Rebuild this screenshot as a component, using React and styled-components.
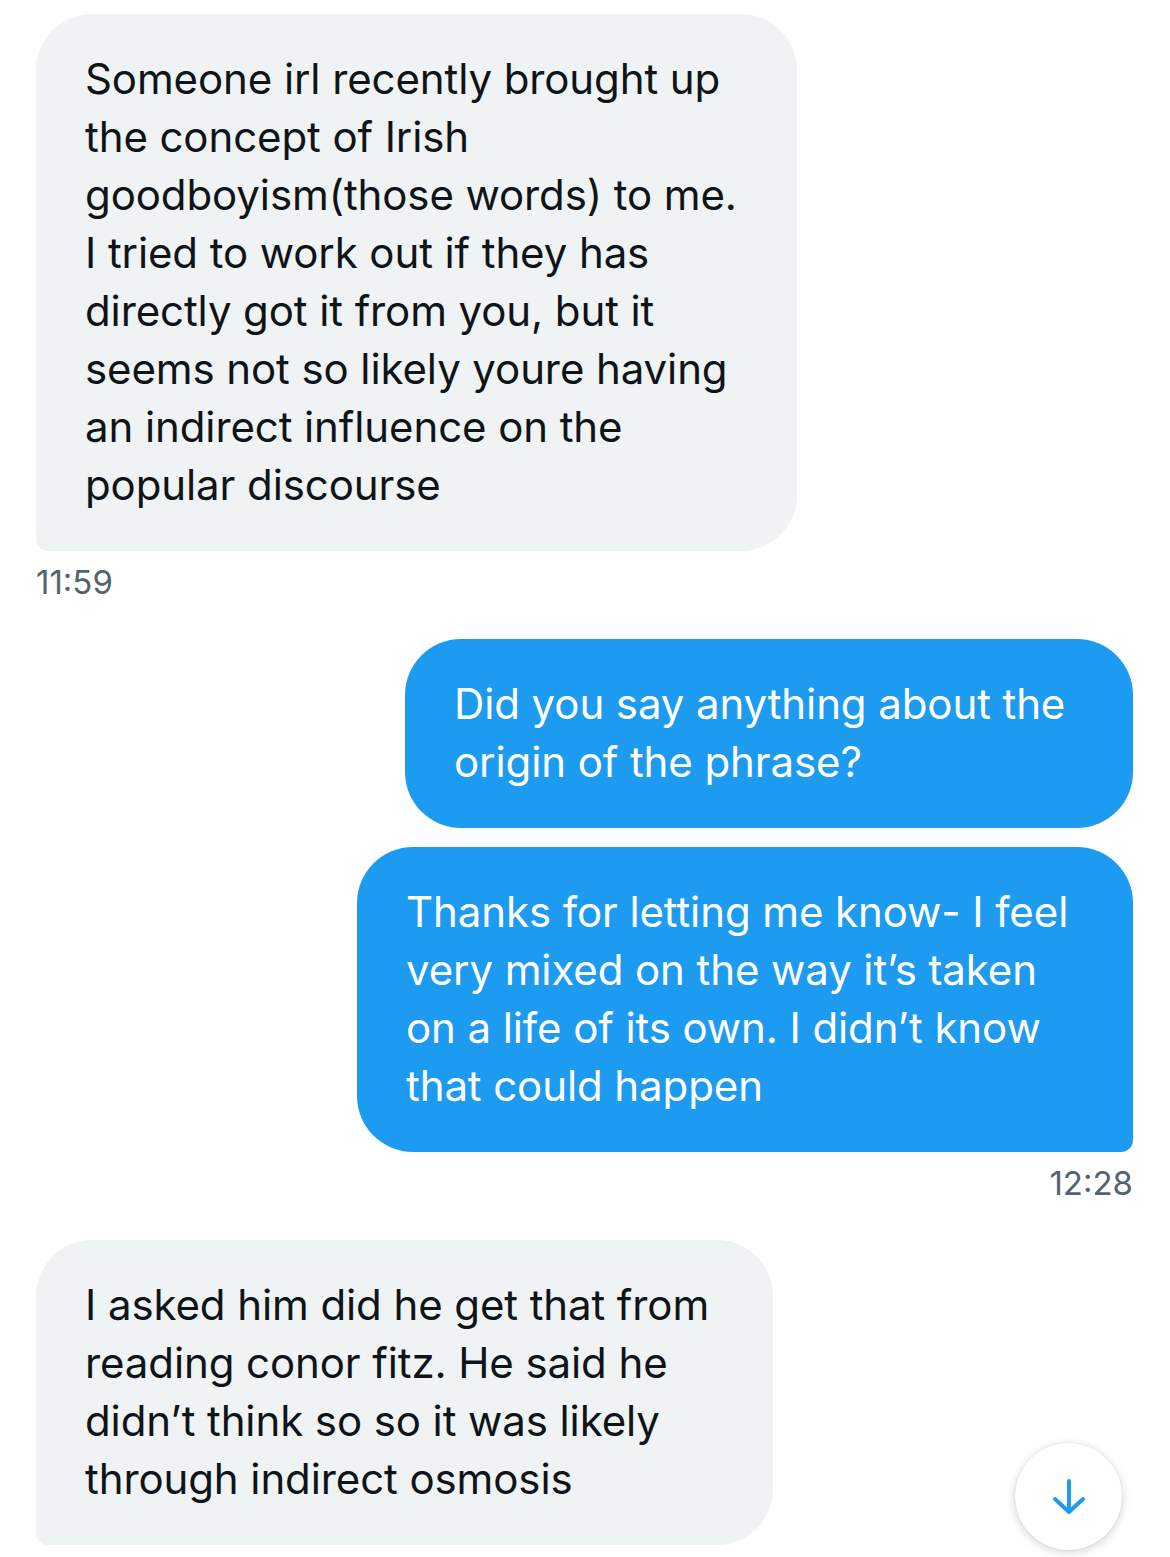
import React from 'react'
import styled, { createGlobalStyle } from 'styled-components'

const GlobalStyle = createGlobalStyle`
  * { box-sizing: border-box; }
  body {
    margin: 0;
    background: #ffffff;
    font-family: Inter, "Noto Sans", "DejaVu Sans", sans-serif;
    -webkit-font-smoothing: antialiased;
  }
`

const Page = styled.div`
  position: relative;
  width: 1170px;
  height: 1557px;
  overflow: hidden;
  background: #fff;
`

const Thread = styled.div`
  display: flex;
  flex-direction: column;
  gap: 35px;
  padding: 14px 37px 0 36px;
`

const Group = styled.div`
  display: flex;
  flex-direction: column;
  align-items: ${(p) => (p.$sent ? 'flex-end' : 'flex-start')};
  gap: 19px;
`

const Bubble = styled.div`
  width: ${(p) => p.$width}px;
  padding: 36px 46px 37px 49px;
  border-radius: 56px;
  ${(p) =>
    p.$tail &&
    (p.$sent ? 'border-bottom-right-radius: 12px;' : 'border-bottom-left-radius: 12px;')}
  background: ${(p) => (p.$sent ? '#1d9bf0' : '#eff3f4')};
  color: ${(p) => (p.$sent ? '#ffffff' : '#0f1419')};
  font-size: 42px;
  line-height: 58px;
  letter-spacing: -0.1px;
`

const Line = styled.div`
  white-space: nowrap;
`

const Time = styled.div`
  margin-top: -10px;
  font-size: 33px;
  line-height: 44px;
  color: #536471;
`

const ScrollButton = styled.button`
  position: absolute;
  right: 48px;
  bottom: 7px;
  width: 107px;
  height: 107px;
  border: none;
  border-radius: 50%;
  background: #ffffff;
  box-shadow: 0 2px 10px rgba(0, 0, 0, 0.18), 0 0 2px rgba(0, 0, 0, 0.08);
  display: flex;
  align-items: center;
  justify-content: center;
  padding: 0;
`

const messages = [
  {
    sent: false,
    time: '11:59',
    bubbles: [
      {
        width: 761,
        lines: [
          'Someone irl recently brought up',
          'the concept of Irish',
          'goodboyism(those words) to me.',
          'I tried to work out if they has',
          'directly got it from you, but it',
          'seems not so likely youre having',
          'an indirect influence on the',
          'popular discourse',
        ],
      },
    ],
  },
  {
    sent: true,
    time: '12:28',
    bubbles: [
      { width: 728, lines: ['Did you say anything about the', 'origin of the phrase?'] },
      {
        width: 776,
        lines: [
          'Thanks for letting me know- I feel',
          'very mixed on the way it’s taken',
          'on a life of its own. I didn’t know',
          'that could happen',
        ],
      },
    ],
  },
  {
    sent: false,
    bubbles: [
      {
        width: 737,
        lines: [
          'I asked him did he get that from',
          'reading conor fitz. He said he',
          'didn’t think so so it was likely',
          'through indirect osmosis',
        ],
      },
    ],
  },
]

function ArrowDown() {
  return (
    <svg width="40" height="40" viewBox="0 0 40 40" fill="none">
      <path
        d="M20 4 V35 M6 22 L20 35 L34 22"
        stroke="#1d9bf0"
        strokeWidth="4"
        strokeLinecap="round"
        strokeLinejoin="round"
      />
    </svg>
  )
}

export default function App() {
  return (
    <Page>
      <GlobalStyle />
      <Thread>
        {messages.map((m, i) => (
          <Group key={i} $sent={m.sent}>
            {m.bubbles.map((b, j) => (
              <Bubble
                key={j}
                $sent={m.sent}
                $width={b.width}
                $tail={j === m.bubbles.length - 1}
              >
                {b.lines.map((l, k) => (
                  <Line key={k}>{l}</Line>
                ))}
              </Bubble>
            ))}
            {m.time && <Time>{m.time}</Time>}
          </Group>
        ))}
      </Thread>
      <ScrollButton aria-label="Scroll to bottom">
        <ArrowDown />
      </ScrollButton>
    </Page>
  )
}
